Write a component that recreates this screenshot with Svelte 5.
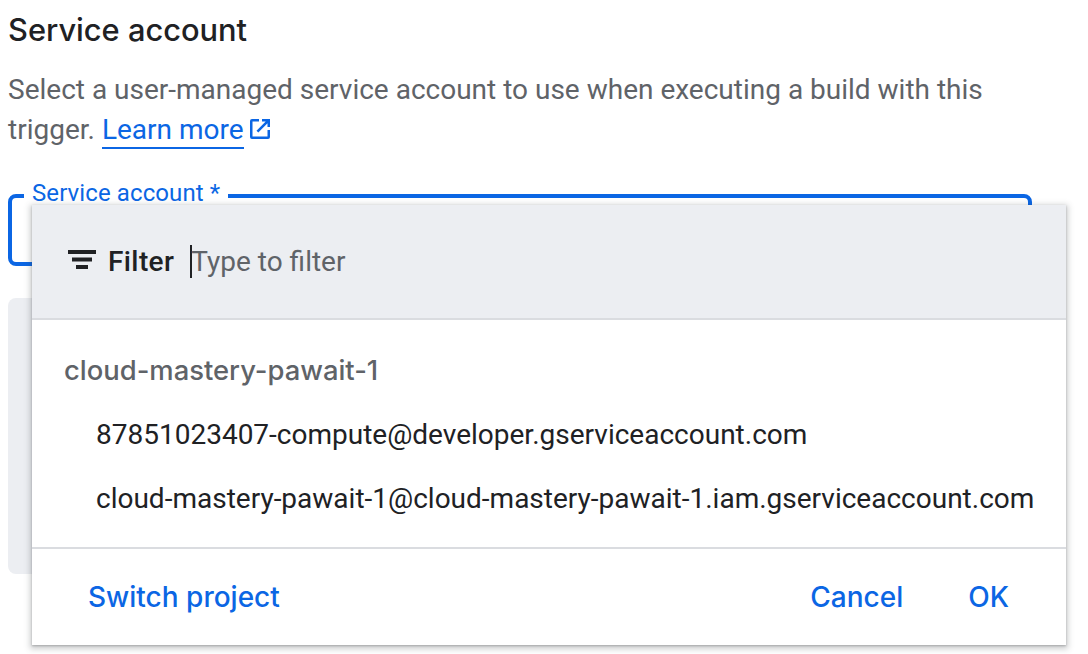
<script>
  let filter = $state('');

  const project = 'cloud-mastery-pawait-1';
  const accounts = [
    '87851023407-compute@developer.gserviceaccount.com',
    'cloud-mastery-pawait-1@cloud-mastery-pawait-1.iam.gserviceaccount.com'
  ];
</script>

<div class="page">
  <h2>Service account</h2>
  <p class="desc">
    Select a user-managed service account to use when executing a build with this
    trigger. <a href="#learn" class="learn">Learn more</a>
    <svg class="ext" viewBox="0 0 20 20" width="20" height="20" aria-hidden="true">
      <path d="M9 0H2a2 2 0 0 0-2 2v16a2 2 0 0 0 2 2h16a2 2 0 0 0 2-2v-7h-2.500v6.500h-15v-15H9z" fill="#0b66e4" />
      <path d="M12 0v2.500h3.700L6.500 11.700l1.800 1.800 9.200-9.200V8H20V0z" fill="#0b66e4" />
    </svg>
  </p>

  <fieldset class="field">
    <legend>Service account *</legend>
  </fieldset>

  <div class="info"></div>

  <div class="popup">
    <div class="filter-bar">
      <svg class="filter-icon" viewBox="0 0 28 19" width="28" height="19" aria-hidden="true">
        <path d="M0 0h28v4H0zM4 7.500h20v4H4zM8 15h12v4H8z" fill="#202124" />
      </svg>
      <span class="filter-label">Filter</span>
      <span class="caret"></span>
      <input bind:value={filter} placeholder="Type to filter" />
    </div>

    <div class="list">
      <div class="project">{project}</div>
      {#each accounts as account}
        <div class="account">{account}</div>
      {/each}
    </div>

    <div class="actions">
      <button>Switch project</button>
      <div class="right">
        <button>Cancel</button>
        <button>OK</button>
      </div>
    </div>
  </div>
</div>

<style>
  :global(body) {
    background: #fff;
    overflow: hidden;
  }

  .page {
    position: relative;
    width: 1088px;
    height: 654px;
    box-sizing: border-box;
    padding: 12px 0 0 8px;
    font-family: Roboto, "Liberation Sans", sans-serif;
    overflow: hidden;
  }

  h2 {
    margin: 0;
    font-family: Inter, Roboto, sans-serif;
    font-size: 30.8px;
    line-height: 36px;
    font-weight: 500;
    color: #202124;
  }

  .desc {
    margin: 22px 0 0;
    width: 1000px;
    font-size: 28px;
    line-height: 40px;
    color: #5f6368;
  }

  .learn {
    color: #0b66e4;
    text-decoration: none;
    border-bottom: 2px solid #0b66e4;
    padding-bottom: 1px;
  }

  .ext {
    margin-left: -1px;
    vertical-align: 0;
  }

  /* legend box is taller than its text so the label sits above the border line */
  .field {
    box-sizing: border-box;
    width: 1024px;
    height: 83px;
    margin: 33px 0 0;
    padding: 0 0 0 12px;
    border: 4px solid #0b66e4;
    border-radius: 8px;
  }

  legend {
    padding: 0 8px 6px;
    font-size: 24px;
    letter-spacing: 0.1px;
    line-height: 20px;
    color: #0b66e4;
  }

  .info {
    width: 1024px;
    height: 276px;
    margin-top: 32px;
    background: #eceef2;
    border-radius: 8px;
  }

  .popup {
    position: absolute;
    left: 32px;
    top: 205px;
    width: 1034px;
    height: 440px;
    display: flex;
    flex-direction: column;
    background: #fff;
    box-shadow: 0 2px 6px 2px rgba(60, 64, 67, 0.25), 0 1px 2px rgba(60, 64, 67, 0.3);
  }

  .filter-bar {
    box-sizing: border-box;
    height: 115px;
    display: flex;
    align-items: center;
    padding-left: 36px;
    background: #eceef2;
    border-bottom: 2px solid #dadce0;
  }

  .filter-icon {
    margin-top: -4px;
  }

  .filter-label {
    margin-left: 12px;
    font-size: 28px;
    letter-spacing: 0.4px;
    font-weight: 500;
    color: #202124;
  }

  .caret {
    width: 2px;
    height: 33px;
    margin-left: 16px;
    background: #202124;
  }

  input {
    flex: 1;
    margin-left: -1px;
    border: 0;
    outline: 0;
    padding: 0;
    background: transparent;
    font: inherit;
    font-size: 28px;
    color: #202124;
  }

  input::placeholder {
    color: #5f6368;
    opacity: 1;
  }

  .list {
    flex: 1;
    padding: 30px 0 0 32px;
  }

  .project {
    margin-bottom: 25px;
    font-family: Inter, Roboto, sans-serif;
    font-size: 27.4px;
    line-height: 40px;
    font-weight: 500;
    color: #5f6368;
  }

  .account {
    margin-top: 24px;
    padding-left: 32px;
    font-size: 28px;
    line-height: 40px;
    color: #202124;
    white-space: nowrap;
  }

  .actions {
    box-sizing: border-box;
    height: 98px;
    display: flex;
    align-items: center;
    justify-content: space-between;
    padding: 0 57px 0 56px;
    border-top: 2px solid #dadce0;
  }

  .right {
    display: flex;
    gap: 65px;
  }

  button {
    border: 0;
    padding: 0;
    background: none;
    font-family: Inter, Roboto, sans-serif;
    font-size: 28px;
    font-weight: 500;
    color: #0b66e4;
  }
</style>
